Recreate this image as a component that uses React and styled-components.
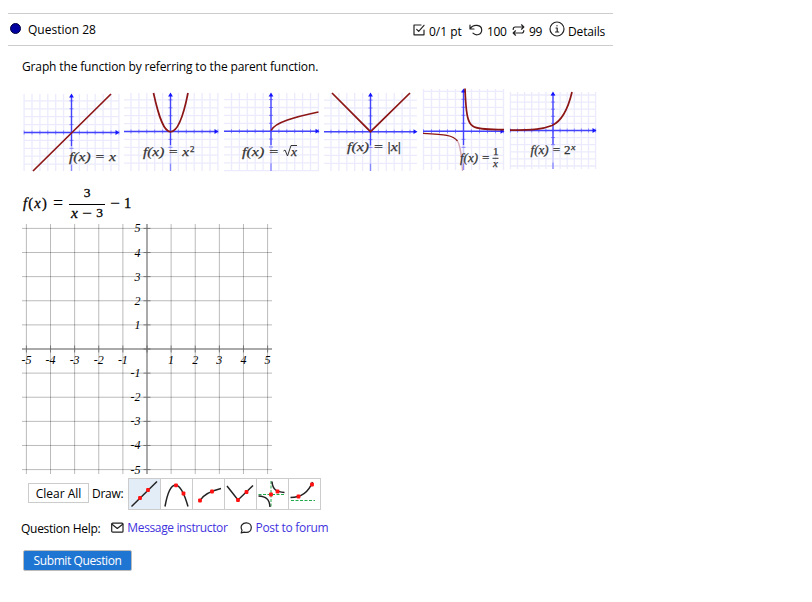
import React from "react";
import styled, { createGlobalStyle } from "styled-components";

const Global = createGlobalStyle`
  body { margin: 0; background: #fff; }
  * { box-sizing: border-box; }
`;

const Page = styled.main`
  width: 605px;
  margin: 13px 0 0 8px;
  color: #000;
  font: 12px/16px "Open Sans", "Noto Sans", sans-serif;
`;
const Header = styled.header`
  height: 33px;
  border: solid #ccc;
  border-width: 1px 0;
  display: flex;
  align-items: center;
  padding: 0 7px 0 1.5px;
`;
const Dot = styled.span`
  width: 11px;
  height: 11px;
  border-radius: 50%;
  background: #0000a0;
  border: 1px solid #000040;
  margin: 0 7.5px 2px 0;
`;
const Label = styled.span`
  letter-spacing: ${(p) => p.$track || 0}px;
  font-weight: ${(p) => p.$weight || 400};
  white-space: nowrap;
`;
const Stats = styled.div`
  display: flex;
  align-items: center;
  margin-left: auto;
  padding-top: 4px;
`;
const Stat = styled.div`
  display: flex;
  align-items: center;
  gap: ${(p) => p.$gap}px;
  width: ${(p) => p.$w}px;
`;
const Icon = styled.svg`
  display: block;
  flex: none;
  fill: none;
  stroke: #222;
  stroke-width: 1.2;
  stroke-linecap: round;
  stroke-linejoin: round;
  margin-top: ${(p) => p.$up || 0}px;
`;
const Prompt = styled.p`
  margin: 0;
  height: 42px;
  padding: 13px 0 0 14px;
`;
const ThumbRow = styled.div`
  display: flex;
  height: 84px;
  padding-left: 16px;
`;
const Drawing = styled.svg`
  display: block;
  flex: none;
  overflow: visible;
`;
const Formula = styled.div`
  height: 52px;
  display: flex;
  align-items: flex-start;
  padding: 12px 0 0 15px;
  font: 14.5px/38px "Liberation Serif", serif;
  -webkit-text-stroke: 0.3px #000;
`;
const Part = styled.span`
  width: ${(p) => p.$w}px;
  letter-spacing: ${(p) => p.$track || 0}px;
`;
const Operator = styled.span`
  width: ${(p) => p.$w}px;
  font-size: 18px;
  -webkit-text-stroke: 0;
`;
const Fraction = styled.span`
  display: flex;
  flex-direction: column;
  align-items: center;
  width: 36px;
  font-size: 13.5px;
  line-height: 18px;
  margin: 1px 5px 0 0;
`;
const Numerator = styled.span`
  width: 100%;
  height: 20px;
  line-height: 15px;
  text-align: center;
  border-bottom: 1px solid #000;
`;
const Denominator = styled.span`
  display: flex;
  justify-content: space-between;
  align-items: center;
  width: 32px;
  line-height: 16px;
`;
const Letter = styled.i`
  font-size: 15.5px;
`;
const GraphBox = styled.div`
  height: 251px;
  padding-left: 14px;
`;
const Tools = styled.div`
  display: flex;
  align-items: center;
  height: 32px;
  margin: 3px 0 0 20px;
`;
const ClearButton = styled.button`
  width: 61px;
  height: 20px;
  padding: 0;
  background: #fff;
  border: 1px solid #ccc;
  color: #000;
  font: inherit;
  line-height: 17px;
  margin: 0 3px 2px 0;
`;
const Palette = styled.div`
  display: flex;
  width: 193px;
  height: 32px;
  border: solid #ccc;
  border-width: 1px 1px 1px 0;
`;
const DrawGroup = styled.div`
  display: flex;
  align-items: center;
  justify-content: space-between;
  width: 229px;
`;
const Tool = styled.button`
  width: 32px;
  padding: 0;
  border: 0;
  border-left: 1px solid #ccc;
  background: ${(p) => (p.$active ? "#e3edf7" : "#fff")};
`;
const Help = styled.div`
  display: flex;
  align-items: center;
  height: 20px;
  margin: 9px 0 0 13px;
`;
const HelpItem = styled.span`
  display: flex;
  align-items: center;
  gap: ${(p) => p.$gap}px;
  margin: 0 0 2px ${(p) => p.$before}px;
`;
const Link = styled.a`
  color: #3f33dd;
  white-space: nowrap;
  letter-spacing: ${(p) => p.$track || 0}px;
`;
const Submit = styled.button`
  display: block;
  width: 109px;
  height: 21px;
  padding: 0;
  margin: 11px 0 0 15px;
  background: #1f75d2;
  border: 1px solid #bbb;
  border-radius: 2px;
  color: #fff;
  font: inherit;
  font-weight: 500;
  letter-spacing: -0.4px;
  line-height: 18px;
`;

const range = (from, to, step, origin) => {
  const out = [];
  for (let v = origin + step * Math.ceil((from - origin) / step); v <= to; v += step) out.push(v);
  return out;
};

/* A small coordinate plane; all planes share one strip-wide coordinate space. */
function Thumb({ left, width, x0, x1, y0, y1, cx, cy, step, children }) {
  const gx = range(x0, x1, step, cx);
  const gy = range(y0, y1, step, cy);
  return (
    <Drawing width={width} height="84" viewBox={`${left} 88 ${width} 84`}>
      <g stroke="#ebebfd" strokeWidth="1.3">
        {gx.map((x) => <path key={x} d={`M${x} ${y0}V${y1}`} />)}
        {gy.map((y) => <path key={y} d={`M${x0} ${y}H${x1}`} />)}
      </g>
      <g stroke="#4444ff" strokeWidth="1.4">
        <path d={`M${x0} ${cy}H${x1 - 2}M${cx} ${y0 + 2}V${cy + 14}`} />
        <path d={`M${cx} ${cy + 14}V${cy + 32}`} stroke="#ccccff" />
        <path d={`M${cx} ${cy + 32}V${y1}`} stroke="#8888ff" />
        <g strokeWidth="0.6">
          {gx.map((x) => <path key={x} d={`M${x} ${cy - 2}v4`} />)}
          {gy.filter((y) => y < cy + 17).map((y) => <path key={y} d={`M${cx - 2} ${y}h4`} />)}
        </g>
      </g>
      <path fill="#1515ff" d={`M${x1 + 0.5} ${cy}l-4-2.4v4.8zM${cx} ${y0 - 0.5}l-2.4 4h4.8z`} />
      {children}
    </Drawing>
  );
}

const Curve = (p) => <path fill="none" stroke="#8c1515" strokeWidth="1.7" {...p} />;
const Caption = ({ x, y, w, size = 13, children }) => (
  <text x={x} y={y} textLength={w} lengthAdjust="spacingAndGlyphs" fontFamily="Liberation Serif, serif" fontStyle="italic" fontSize={size} fill="#333" stroke="#333" strokeWidth="0.25">
    {children}
  </text>
);

const UNIT = 24.12;
const TICKS = [-5, -4, -3, -2, -1, 1, 2, 3, 4, 5];
const ALL = [-5, -4, -3, -2, -1, 0, 1, 2, 3, 4, 5];

function Grid() {
  const X = (n) => 147 + n * UNIT;
  const Y = (n) => 349 - n * UNIT;
  return (
    <Drawing width="251" height="251" viewBox="22 224 251 251">
      <g stroke="#000" strokeOpacity="0.27">
        {TICKS.map((n) => <path key={n} d={`M${X(n)} 224V474M22 ${Y(n)}H272`} />)}
      </g>
      <path d="M147 224V474M22 349H272" stroke="#aaa" strokeWidth="2" />
      <g stroke="#444">
        {ALL.map((n) => <path key={n} d={`M${X(n)} 345.5v7M143.5 ${Y(n)}h7`} strokeOpacity="0.6" />)}
      </g>
      <g fontFamily="Liberation Serif, serif" fontStyle="italic" fontSize="12" fill="#000">
        {TICKS.map((n) => <text key={n} x={X(n)} y="363.5" textAnchor="middle">{n}</text>)}
        {TICKS.map((n) => <text key={n} x="140.5" y={Y(n) + 4} textAnchor="end">{n}</text>)}
      </g>
    </Drawing>
  );
}

const TOOLS = [
  { d: "M2.5 27.5L28 2.5", dots: [[11, 19], [19, 11]] },
  { d: "M4 27.5C9 -1 19 -1 27 27.5", dots: [[15, 6.3], [22.5, 14.5]] },
  { d: "M7 21.5C10 16 18 12 28 9.5", dots: [[7, 21.5], [19, 12.5]] },
  { d: "M2 7L13 21L28 6.5", dots: [[13, 21], [21.5, 13]] },
  { d: "M15 2.5C15.5 11 20 13 27.5 13.5M1.5 17C9 17.5 12.5 20 13 28", guide: "M14 2V28M1.5 15.5H28", dots: [[14, 15.5], [20.5, 12.5]] },
  { d: "M1.5 18.5C14 18.5 20 12 23.5 3", guide: "M2 21.5H26", dots: [[9.5, 17.5], [23, 5.5]] },
];

export default function App() {
  return (
    <>
      <Global />
      <Page>
        <Header>
          <Dot />
          <Label $weight={500}>Question 28</Label>
          <Stats>
            <Stat $w={56} $gap={4}>
              <Icon width="12" height="12" viewBox="0 0 12 12" $up={-3}>
                <path d="M11 6v4.8H1V1h7M3.7 5.3l2 2L11 1.3" />
              </Icon>
              <Label>0/1 pt</Label>
            </Stat>
            <Stat $w={43} $gap={4}>
              <Icon width="14" height="12" viewBox="0 0 14 12" $up={-4}>
                <path d="M1 1v4h4M1.3 4.7C4-.2 12.7.4 12.7 6c0 5-6 6-8.7 3.2" />
              </Icon>
              <Label $track={-0.4}>100</Label>
            </Stat>
            <Stat $w={37} $gap={4}>
              <Icon width="13" height="12" viewBox="0 0 13 12" $up={-4}>
                <path d="M9.5.8l2.3 2.2-2.3 2.2M11.5 3H3.2Q1.2 3 1.2 5.5M3.5 6.8L1.2 9l2.3 2.2M1.5 9h8.3q2 0 2-2.5" />
              </Icon>
              <Label $track={-0.4}>99</Label>
            </Stat>
            <Stat $w={57} $gap={3}>
              <Icon width="16" height="16" viewBox="0 0 16 16" $up={-5}>
                <circle cx="8" cy="8" r="7" />
                <path d="M7 7h1.2v4M6.5 11h3.2M8 4.5v.3" />
              </Icon>
              <Label $track={-0.15}>Details</Label>
            </Stat>
          </Stats>
        </Header>

        <Prompt><Label $track={-0.14}>Graph the function by referring to the parent function.</Label></Prompt>

        <ThumbRow>
          <Thumb left={24} width={100} x0={24} x1={119} y0={94} y1={171} cx={71.5} cy={132.5} step={7.9}>
            <Curve d="M33 171L111 94" />
            <Caption x={69} y={161} w={47}>f(x) = x</Caption>
          </Thumb>
          <Thumb left={124} width={100} x0={124} x1={218} y0={93} y1={171} cx={170.5} cy={131.5} step={7.9}>
            <Curve d="M153.5 93C159 118 164 131.8 170.5 131.8S183 118 188 93" />
            <Caption x={143} y={156} w={46}>f(x) = x</Caption>
            <Caption x={190} y={151.5} w={4.5} size={9}><tspan fontStyle="normal">2</tspan></Caption>
          </Thumb>
          <Thumb left={224} width={100} x0={224} x1={319} y0={93} y1={171} cx={271} cy={131.2} step={7.9}>
            <Curve d="M271 130.5C275 122 295 117 318.5 112" />
            <Caption x={242} y={156} w={37}>f(x) =</Caption>
            <Caption x={291} y={156} w={6}>x</Caption>
            <path d="M283.5 151l1.5-1 2.5 6 3.5-10.5h6" fill="none" stroke="#333" />
          </Thumb>
          <Thumb left={324} width={99} x0={324} x1={417} y0={93} y1={171} cx={370.5} cy={131.7} step={7.9}>
            <Curve d="M332 93L370.5 131.7L410 93" />
            <Caption x={347} y={151} w={54}>f(x) = <tspan fontStyle="normal">|</tspan>x<tspan fontStyle="normal">|</tspan></Caption>
          </Thumb>
          <Thumb left={423} width={87} x0={423} x1={504} y0={89} y1={170} cx={463.5} cy={131.3} step={8}>
            <Curve d="M465 88.5C466 114 467.5 123 473 126.3S488 129.3 504 129.7" />
            <Curve d="M423 133.3C445 134.5 453 135 457.5 141" strokeWidth="1.3" />
            <Curve d="M457.5 141C461 147 461.5 157 462.5 171" strokeWidth="1.3" stroke="#d6aaba" />
            <Caption x={460} y={162} w={30} size={12}>f(x) =</Caption>
            <path d="M492.5 158.3h6" stroke="#333" />
            <Caption x={493} y={155} size={11}><tspan fontStyle="normal">1</tspan></Caption>
            <Caption x={493} y={167} size={11}>x</Caption>
          </Thumb>
          <Thumb left={510} width={90} x0={510} x1={596} y0={92} y1={169} cx={553} cy={130.5} step={7.1}>
            <Curve d="M510 130.2C535 130 543 129 552 125.5C562 121 568 109 572 92" />
            <Caption x={530.5} y={154} w={40} size={12}>f(x) = <tspan fontStyle="normal">2</tspan></Caption>
            <Caption x={571} y={150} w={4.5} size={8}>x</Caption>
          </Thumb>
        </ThumbRow>

        <Formula>
          <Part $w={30} $track={1.2}><i>f</i>(<i>x</i>)</Part>
          <Operator $w={16}>=</Operator>
          <Fraction>
            <Numerator>3</Numerator>
            <Denominator><Letter>x</Letter><Operator>−</Operator>3</Denominator>
          </Fraction>
          <Operator $w={14}>−</Operator>
          <Part>1</Part>
        </Formula>

        <GraphBox><Grid /></GraphBox>

        <Tools>
          <ClearButton>Clear All</ClearButton>
          <DrawGroup>
            <Label $track={-0.3}>Draw:</Label>
            <Palette>
              {TOOLS.map((t, i) => (
                <Tool key={i} $active={i === 0}>
                  <Drawing width="31" height="30" viewBox="0 0 31 30">
                    {t.guide && <path d={t.guide} stroke="#22aa4a" strokeDasharray="3 1.5" />}
                    <path d={t.d} fill="none" stroke="#222" strokeWidth="1.5" />
                    {t.dots.map(([x, y]) => <rect key={x} x={x - 1.9} y={y - 1.9} width="3.8" height="3.8" rx="1" fill="#f11" />)}
                  </Drawing>
                </Tool>
              ))}
            </Palette>
          </DrawGroup>
        </Tools>

        <Help>
          <Label $track={-0.28}>Question Help:</Label>
          <HelpItem $before={11} $gap={3}>
            <Icon width="13" height="12" viewBox="0 0 13 12">
              <rect x="0.7" y="1.2" width="11.3" height="9" rx="1" />
              <path d="M1 2.2l5.3 4.3 5.4-4.3" />
            </Icon>
            <Link $track={-0.37}>Message instructor</Link>
          </HelpItem>
          <HelpItem $before={12} $gap={4}>
            <Icon width="12" height="12" viewBox="0 0 12 12">
              <path d="M1.2 11l.8-2.7C-.4 4 2.7.8 6.3.8c3 0 5 2.2 5 4.8s-2 4.8-5 4.8c-.9 0-1.8-.1-2.3-.3z" />
            </Icon>
            <Link $track={-0.3}>Post to forum</Link>
          </HelpItem>
        </Help>
        <Submit>Submit Question</Submit>
      </Page>
    </>
  );
}
